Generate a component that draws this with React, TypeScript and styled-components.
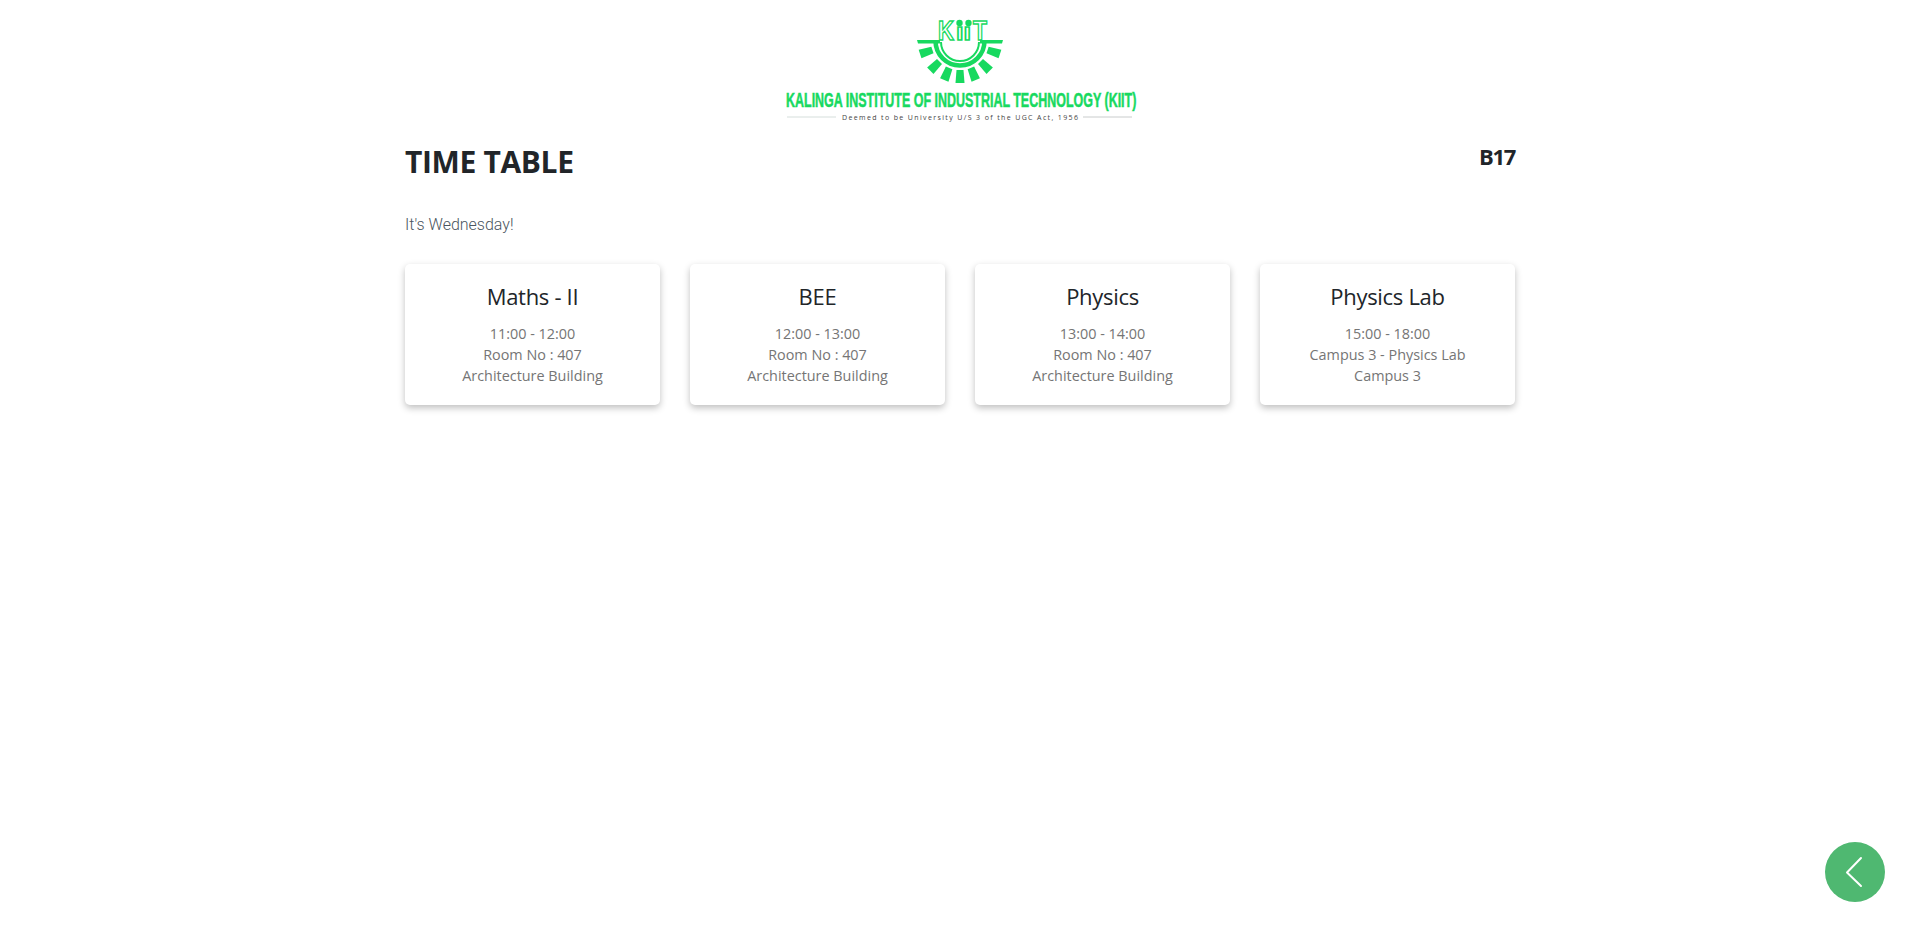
import styled, { createGlobalStyle } from "styled-components";

const GlobalStyle = createGlobalStyle`
  html, body {
    margin: 0;
    padding: 0;
    background: #fff;
  }
  body {
    font-family: "Open Sans", "Liberation Sans", sans-serif;
    color: #212529;
  }
`;

const Page = styled.main`
  min-height: 937px;
  box-sizing: border-box;
  display: flex;
  flex-direction: column;
  align-items: center;
`;

const LogoWrap = styled.header`
  display: flex;
  justify-content: center;
  width: 100%;
  padding-top: 14px;
  height: 112px;
`;

const Container = styled.section`
  width: 1110px;
  display: flex;
  flex-direction: column;
`;

const TitleRow = styled.div`
  display: flex;
  justify-content: space-between;
  align-items: flex-start;
  padding-top: 17px;
  height: 61px;
`;

const Title = styled.h1`
  margin: 1px 0 0;
  font-size: 30px;
  line-height: 36px;
  font-weight: 700;
  letter-spacing: -0.35px;
  color: #212529;
`;

const Batch = styled.h2`
  margin: 0;
  font-size: 22px;
  line-height: 26px;
  font-weight: 700;
  letter-spacing: -1.3px;
  color: #212529;
`;

const DayNote = styled.p`
  margin: 9px 0 0;
  font-family: Roboto, "Liberation Sans", sans-serif;
  font-size: 16px;
  line-height: 24px;
  font-weight: 300;
  color: #4a5560;
`;

const CardGrid = styled.div`
  display: grid;
  grid-template-columns: repeat(4, 255px);
  column-gap: 30px;
  margin-top: 27px;
`;

const Card = styled.article`
  height: 141px;
  box-sizing: border-box;
  padding: 20px 10px 0;
  text-align: center;
  background: #fff;
  border-radius: 5px;
  box-shadow: 0 3px 7px rgba(0, 0, 0, 0.25);
`;

const Subject = styled.h3`
  margin: 0 0 15px;
  font-size: 22px;
  line-height: 24px;
  font-weight: 400;
  letter-spacing: -0.3px;
  color: #212529;
`;

const Detail = styled.div`
  font-size: 14.4px;
  line-height: 21px;
  color: #757575;
`;

const BackButton = styled.button`
  position: fixed;
  right: 35px;
  bottom: 35px;
  width: 60px;
  height: 60px;
  padding: 0;
  border: none;
  border-radius: 50%;
  background: #4fb871;
  display: flex;
  align-items: center;
  justify-content: center;
`;

const GREEN = "#17d95f";

const toothAngles = [18, 45, 68, 90, 112, 135, 162];

const KiitLogo = () => (
  <svg width="360" height="112" viewBox="0 0 360 112" aria-label="KIIT logo">
    {/* gear teeth */}
    {toothAngles.map((a) => (
      <path
        key={a}
        d="M176.5 56 H183.5 L184.5 69 H175.5 Z"
        fill={GREEN}
        transform={`rotate(${a - 90} 180 27)`}
      />
    ))}
    <path d="M137 26 H160 V29.5 H138 Z" fill={GREEN} />
    <path d="M223 26 H200 V29.5 H222 Z" fill={GREEN} />
    {/* rings */}
    <path
      d="M155.5 27 A24.5 24.5 0 0 0 204.5 27"
      fill="none"
      stroke={GREEN}
      strokeWidth="4.5"
    />
    <path
      d="M161 28 A19 19 0 0 0 199 28"
      fill="none"
      stroke={GREEN}
      strokeWidth="2"
    />
    {/* KiiT letters */}
    <g
      fontFamily="Liberation Sans"
      fontWeight="700"
      fill="#fff"
      stroke={GREEN}
      strokeWidth="1.5"
    >
      <text x="158" y="26" fontSize="28" textLength="16" lengthAdjust="spacingAndGlyphs">
        K
      </text>
      <text x="176" y="26" fontSize="23" textLength="15" lengthAdjust="spacingAndGlyphs">
        ıı
      </text>
      <text x="193" y="26" fontSize="28" textLength="14" lengthAdjust="spacingAndGlyphs">
        T
      </text>
    </g>
    <circle cx="179.5" cy="9" r="3.2" fill={GREEN} />
    <circle cx="188.5" cy="9" r="3.2" fill={GREEN} />
    {/* name */}
    <text
      transform="translate(6 92.5) scale(0.64 1)"
      fontFamily="Liberation Sans"
      fontWeight="700"
      fontSize="19.5"
      fill={GREEN}
      stroke={GREEN}
      strokeWidth="0.5"
    >
      KALINGA INSTITUTE OF INDUSTRIAL TECHNOLOGY (KIIT)
    </text>
    <line x1="7" y1="103" x2="56" y2="103" stroke="#d5dedb" />
    <line x1="303" y1="103" x2="352" y2="103" stroke="#c9cccc" />
    <text
      x="62"
      y="105.5"
      fontFamily="Open Sans"
      fontSize="7"
      fill="#444"
      textLength="236"
    >
      Deemed to be University U/S 3 of the UGC Act, 1956
    </text>
  </svg>
);

type Slot = {
  subject: string;
  time: string;
  room: string;
  building: string;
};

const slots: Slot[] = [
  { subject: "Maths - II", time: "11:00 - 12:00", room: "Room No : 407", building: "Architecture Building" },
  { subject: "BEE", time: "12:00 - 13:00", room: "Room No : 407", building: "Architecture Building" },
  { subject: "Physics", time: "13:00 - 14:00", room: "Room No : 407", building: "Architecture Building" },
  { subject: "Physics Lab", time: "15:00 - 18:00", room: "Campus 3 - Physics Lab", building: "Campus 3" },
];

const App = () => {
  return (
    <Page>
      <GlobalStyle />
      <LogoWrap>
        <KiitLogo />
      </LogoWrap>
      <Container>
        <TitleRow>
          <Title>TIME TABLE</Title>
          <Batch>B17</Batch>
        </TitleRow>
        <DayNote>It's Wednesday!</DayNote>
        <CardGrid>
          {slots.map((slot) => (
            <Card key={slot.subject}>
              <Subject>{slot.subject}</Subject>
              <Detail>{slot.time}</Detail>
              <Detail>{slot.room}</Detail>
              <Detail>{slot.building}</Detail>
            </Card>
          ))}
        </CardGrid>
      </Container>
      <BackButton aria-label="Back">
        <svg width="60" height="60" viewBox="0 0 60 60">
          <path
            d="M36 16 L22 30.5 L36 44"
            fill="none"
            stroke="#fff"
            strokeWidth="2"
            strokeLinecap="round"
            strokeLinejoin="round"
          />
        </svg>
      </BackButton>
    </Page>
  );
};

export default App;
